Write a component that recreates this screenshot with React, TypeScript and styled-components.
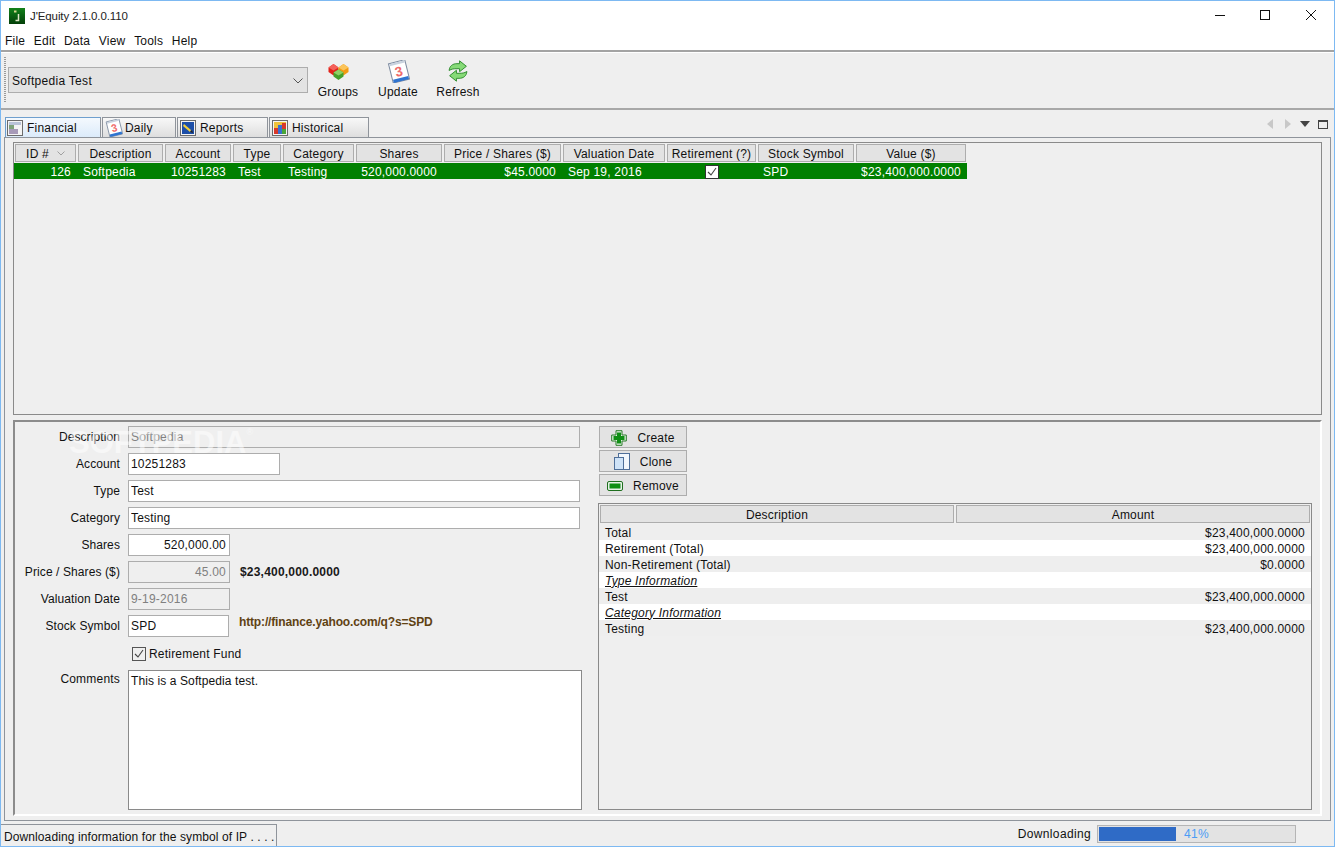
import React from "react";
import styled, { createGlobalStyle } from "styled-components";

const GlobalStyle = createGlobalStyle`
  html, body {
    margin: 0;
    padding: 0;
    background: #efefef;
  }
  * {
    box-sizing: border-box;
  }
`;

const Window = styled.div`
  width: 1335px;
  height: 847px;
  display: flex;
  flex-direction: column;
  overflow: hidden;
  background: #efefef;
  border: 1px solid #7db9f2;
  color: #111;
  font-family: "Liberation Sans", Arial, sans-serif;
  font-size: 12px;
  letter-spacing: 0.2px;
`;

const TitleBar = styled.div`
  height: 29px;
  flex: none;
  display: flex;
  align-items: center;
  padding-left: 8px;
  background: #fff;
`;

const TitleText = styled.span`
  margin-left: 5px;
  font-size: 11.5px;
  letter-spacing: -0.1px;
  color: #222;
`;

const WindowControls = styled.div`
  margin-left: auto;
  display: flex;
`;

const WindowControl = styled.div`
  width: 46px;
  height: 29px;
  display: flex;
  align-items: center;
  justify-content: center;
  padding-bottom: 1px;
`;

const MenuBar = styled.div`
  height: 20px;
  flex: none;
  display: flex;
  align-items: center;
  gap: 8.7px;
  padding: 2px 0 0 4px;
  background: #fff;
`;

const ToolBar = styled.div`
  height: 60px;
  flex: none;
  display: flex;
  align-items: flex-start;
  padding-left: 3px;
  border-top: 2px solid #a3a3a3;
  border-bottom: 2px solid #a8a8a8;
  box-shadow: inset 0 1px 0 #fff;
`;

const Grip = styled.div`
  width: 2px;
  height: 46px;
  margin: 5px 2px 0 0;
  background-image: linear-gradient(#9a9a9a 50%, transparent 50%);
  background-size: 2px 2px;
`;

const Combo = styled.div`
  width: 300px;
  height: 26px;
  display: flex;
  align-items: center;
  justify-content: space-between;
  margin-top: 15px;
  padding: 1px 4px 0 3px;
  background: #e3e3e3;
  border: 1px solid #adadad;
  letter-spacing: 0.3px;
`;

const ToolButton = styled.div`
  width: 60px;
  height: 39px;
  margin-top: 8px;
  display: flex;
  flex-direction: column;
  align-items: center;
  justify-content: space-between;
`;

const ToolIconSlot = styled.div`
  height: 22px;
  display: flex;
  align-items: center;
`;

const Workspace = styled.div`
  flex: none;
  display: flex;
  flex-direction: column;
  padding: 7px 3px 0;
`;

const TabStrip = styled.div`
  height: 20px;
  flex: none;
  display: flex;
  align-items: stretch;
  padding-left: 1px;
`;

const Tab = styled.div<{ $active?: boolean; $width: number; $gap?: number }>`
  width: ${(p) => p.$width}px;
  margin-right: 1px;
  display: flex;
  align-items: center;
  gap: ${(p) => p.$gap ?? 4}px;
  padding-left: ${(p) => (p.$active ? 1 : 2)}px;
  border: 1px solid #8f949b;
  border-bottom: none;
  border-left-color: ${(p) => (p.$active ? "#6f9fce" : "#8f949b")};
  border-top-color: ${(p) => (p.$active ? "#6f9fce" : "#8f949b")};
  background: ${(p) =>
    p.$active
      ? "linear-gradient(#f4f9fe, #dcebfa)"
      : "linear-gradient(#f8f8f8, #dedede)"};
`;

const DockControls = styled.div`
  margin-left: auto;
  display: flex;
  align-items: center;
  padding-right: 2px;
  padding-bottom: 6px;
`;

const TabPanel = styled.div`
  height: 684px;
  flex: none;
  display: flex;
  flex-direction: column;
  padding: 4px 8px 4px 8px;
  border: 1px solid #8f949b;
`;

const TableBox = styled.div`
  height: 273px;
  flex: none;
  padding: 1px 0;
  border: 1px solid #8a8a8a;
`;

const COLUMNS = "61px 85px 66px 48px 71px 86px 117px 102px 89px 96px 110px";

const HeaderRow = styled.div`
  display: grid;
  grid-template-columns: ${COLUMNS};
  column-gap: 2px;
  width: fit-content;
  padding: 0 1px;
`;

const HeaderCell = styled.div`
  height: 18px;
  display: flex;
  align-items: center;
  justify-content: center;
  gap: 8px;
  padding-top: 1px;
  background: #e3e3e3;
  border: 1px solid #adadad;
`;

const DataRow = styled(HeaderRow)`
  height: 16px;
  margin-top: 1px;
  padding-top: 1px;
  align-items: center;
  background: #008000;
  color: #fff;
`;

const DataCell = styled.div<{ $align?: string }>`
  padding: 0 5px;
  text-align: ${(p) => p.$align || "left"};
  white-space: nowrap;
  display: ${(p) => (p.$align === "center" ? "flex" : "block")};
  justify-content: center;
`;

const FormPanel = styled.div`
  position: relative;
  flex: 1;
  min-height: 0;
  display: flex;
  margin-top: 5px;
  border: 2px solid;
  border-color: #8c8c8c #fff #fff #8c8c8c;
`;

const Watermark = styled.div`
  position: absolute;
  left: 54px;
  top: 3px;
  font-size: 31px;
  font-weight: bold;
  letter-spacing: 0;
  color: rgba(255, 255, 255, 0.5);
  pointer-events: none;
  sup {
    font-size: 9px;
    font-weight: normal;
    vertical-align: 18px;
  }
`;

const FormColumn = styled.div`
  width: 583px;
  flex: none;
  display: flex;
  flex-direction: column;
  gap: 5px;
  padding-top: 4px;
`;

const FormRow = styled.div`
  display: flex;
  align-items: center;
  gap: 8px;
  height: 22px;
`;

const FieldLabel = styled.label`
  width: 105px;
  flex: none;
  text-align: right;
  white-space: nowrap;
  letter-spacing: 0.1px;
`;

const Field = styled.input<{ $width: number; $right?: boolean }>`
  width: ${(p) => p.$width}px;
  height: 22px;
  padding: 0 3px 0 2px;
  background: #fff;
  border: 1px solid #adadad;
  border-radius: 0;
  outline: none;
  color: #111;
  font: 12px "Liberation Sans", Arial, sans-serif;
  letter-spacing: 0.2px;
  text-align: ${(p) => (p.$right ? "right" : "left")};
  &:disabled {
    background: #efefef;
    color: #808080;
    -webkit-text-fill-color: #808080;
    opacity: 1;
  }
`;

const StrongValue = styled.span`
  margin-left: 2px;
  font-weight: bold;
  color: #1a1a1a;
`;

const LinkValue = styled.span`
  align-self: flex-start;
  margin: 0 0 0 2px;
  font-weight: bold;
  letter-spacing: -0.15px;
  color: #5f4213;
`;

const CheckRow = styled.div`
  display: flex;
  align-items: center;
  gap: 3px;
  height: 17px;
  margin: 3px 0 0 117px;
`;

const CommentRow = styled.div`
  display: flex;
  gap: 8px;
  margin-top: 3px;
`;

const CommentLabel = styled(FieldLabel)`
  padding-top: 2px;
  letter-spacing: 0.2px;
`;

const CommentBox = styled.textarea`
  width: 454px;
  height: 140px;
  padding: 3px 2px;
  resize: none;
  background: #fff;
  border: 1px solid #8a8a8a;
  border-radius: 0;
  outline: none;
  color: #111;
  font: 12px "Liberation Sans", Arial, sans-serif;
  letter-spacing: 0.1px;
`;

const SideColumn = styled.div`
  flex: 1;
  min-width: 0;
  display: flex;
  flex-direction: column;
  padding: 4px 8px 4px 0;
`;

const ActionButtons = styled.div`
  display: flex;
  flex-direction: column;
  gap: 2px;
  margin-left: 1px;
`;

const ActionButton = styled.div`
  width: 88px;
  height: 22px;
  display: flex;
  align-items: center;
  justify-content: center;
  gap: 10px;
  padding-top: 1px;
  background: #e3e3e3;
  border: 1px solid #adadad;
`;

const Summary = styled.div`
  flex: 1;
  margin-top: 7px;
  padding-top: 1px;
  border: 1px solid #8a8a8a;
`;

const SummaryHeader = styled.div`
  display: grid;
  grid-template-columns: 354px 354px;
  column-gap: 2px;
  padding: 0 1px;
  margin-bottom: 1px;
`;

const SummaryRow = styled.div<{ $odd: boolean }>`
  height: 16px;
  display: flex;
  align-items: center;
  justify-content: space-between;
  padding: 1px 6px 0;
  background: ${(p) => (p.$odd ? "#fff" : "#eeeeee")};
`;

const SectionTitle = styled.span`
  font-style: italic;
  text-decoration: underline;
`;

const StatusBar = styled.div`
  flex: 1;
  min-height: 0;
  display: flex;
  align-items: flex-start;
  padding: 3px 0 0;
`;

const StatusMessage = styled.div`
  width: 276px;
  height: 22px;
  display: flex;
  align-items: center;
  padding: 2px 0 0 3px;
  border-top: 1px solid #8f949b;
  border-right: 1px solid #8f949b;
  white-space: nowrap;
  letter-spacing: 0.1px;
`;

const ProgressArea = styled.div`
  margin-left: auto;
  display: flex;
  align-items: center;
  gap: 6px;
  height: 18px;
  margin-top: 1px;
  padding-right: 38px;
  letter-spacing: 0.35px;
`;

const ProgressTrack = styled.div`
  position: relative;
  width: 199px;
  height: 18px;
  padding: 1px;
  background: #e3e3e3;
  border: 1px solid #b5b5b5;
`;

const ProgressFill = styled.div`
  height: 100%;
  background: #2f6bc6;
`;

const ProgressText = styled.span`
  position: absolute;
  inset: 0;
  display: flex;
  align-items: center;
  justify-content: center;
  color: #4a9cf5;
`;

const AppLogo = () => (
  <svg width="16" height="16" viewBox="0 0 16 16">
    <defs>
      <linearGradient id="logoFill" x1="0" y1="0" x2="0" y2="1">
        <stop offset="0" stopColor="#12821a" />
        <stop offset="1" stopColor="#033f08" />
      </linearGradient>
    </defs>
    <rect width="16" height="16" fill="url(#logoFill)" />
    <path d="M9.500 6v6.500H6.500" fill="none" stroke="#dfe6c8" strokeWidth="1.500" />
    <rect x="5" y="2.500" width="2.500" height="2" fill="#d8d890" />
  </svg>
);

const GroupsIcon = () => (
  <svg width="21" height="17" viewBox="0 0 21 17">
    <path d="M0.500 4.500l5-3.500 5 3.500v4.500l-5 3.500-5-3.500z" fill="#e2231a" />
    <path d="M0.500 4.500l5 3 5-3-5-3.500z" fill="#f4605a" />
    <path d="M10.500 4.500l5-3.500 5 3.500v4.500l-5 3.500-5-3.500z" fill="#f39a12" />
    <path d="M10.500 4.500l5 3 5-3-5-3.500z" fill="#fbc45a" />
    <path d="M5.500 9.500l5-3 5 3v4l-5 3.500-5-3.500z" fill="#45a12a" />
    <path d="M5.500 9.500l5 3 5-3-5-3z" fill="#8fd064" />
  </svg>
);

const CalendarIcon = ({ size }: { size: number }) => (
  <svg width={size} height={size} viewBox="0 0 22 22">
    <g transform="rotate(-14 11 11)">
      <rect x="3.500" y="1.500" width="16" height="19" fill="#fff" stroke="#7d8ba0" />
      <rect x="4" y="17.500" width="15" height="3" fill="#2f74d0" />
      <rect x="4" y="2" width="15" height="2" fill="#c9d2de" />
      <text
        x="11.500"
        y="15.500"
        textAnchor="middle"
        fontSize="13"
        fontWeight="bold"
        fontFamily="Liberation Sans"
        fill="#f06a6a"
      >
        3
      </text>
    </g>
  </svg>
);

const RefreshIcon = () => (
  <svg width="22" height="22" viewBox="0 0 20 21">
    <path
      d="M1.500 10C2 5.500 5 3.500 9 3.500h2.500V0.800L18 6l-6.500 5.200V8.300H9C6 8.300 4 8.500 1.500 10z"
      fill="#86da77"
      stroke="#2c8a2c"
      strokeWidth="0.900"
    />
    <path
      d="M18.500 11c-.5 4.500-3.500 6.500-7.500 6.500H8.500v2.700L2 15l6.500-5.200v2.900H11c3 0 5 -.2 7.500-1.700z"
      fill="#86da77"
      stroke="#2c8a2c"
      strokeWidth="0.900"
    />
  </svg>
);

const IconFrame = ({ children }: { children: React.ReactNode }) => (
  <svg width="16" height="16" viewBox="0 0 16 16">
    <rect x="0.500" y="0.500" width="15" height="15" fill="#f4f4f4" stroke="#6b6b6b" />
    {children}
  </svg>
);

const FinancialIcon = () => (
  <IconFrame>
    <rect x="2" y="2" width="12" height="3" fill="#b9c3d8" />
    <rect x="2" y="5" width="5" height="4" fill="#7fa37a" />
    <rect x="2" y="9" width="9" height="5" fill="#a79ab8" />
  </IconFrame>
);

const ReportsIcon = () => (
  <IconFrame>
    <rect x="2" y="2" width="12" height="12" fill="#1d4fa8" />
    <path d="M4 4l7 6-1 2-7-6z" fill="#f2cf3a" />
    <path d="M10 12l3 1-1-3z" fill="#222" />
  </IconFrame>
);

const HistoricalIcon = () => (
  <IconFrame>
    <rect x="2" y="2" width="12" height="12" fill="#f0c23a" />
    <rect x="2" y="8" width="4" height="6" fill="#d8392b" />
    <rect x="6" y="5" width="4" height="9" fill="#3b6fd0" />
    <rect x="10" y="3" width="4" height="6" fill="#d8392b" />
    <rect x="10" y="9" width="4" height="5" fill="#4aa63a" />
  </IconFrame>
);

const PlusIcon = () => (
  <svg width="16" height="16" viewBox="0 0 16 16">
    <path
      d="M5 0.700h6v4.300h4.300v6H11v4.300H5V11H0.700V5H5z"
      fill="#dff0df"
      stroke="#2a7d2a"
      strokeLinejoin="round"
    />
    <path d="M6 2.500h4V6h3.500v4H10v3.500H6V10H2.500V6H6z" fill="#0f8f14" />
  </svg>
);

const CloneIcon = () => (
  <svg width="16" height="17" viewBox="0 0 16 17">
    <rect x="4.500" y="0.500" width="11" height="16" fill="#f2f7fc" stroke="#4f6f99" />
    <rect x="0.500" y="4.500" width="9" height="12" fill="#cfe3f7" stroke="#4f6f99" />
  </svg>
);

const RemoveIcon = () => (
  <svg width="16" height="10" viewBox="0 0 16 10">
    <rect x="0.500" y="0.500" width="15" height="9" rx="1.500" fill="#e6f2e6" stroke="#1f6f1f" />
    <rect x="2.500" y="2.500" width="11" height="5" fill="#0f8f14" />
  </svg>
);

const Chevron = () => (
  <svg width="10" height="6" viewBox="0 0 10 6">
    <path d="M0.500 0.500L5 5l4.500-4.500" fill="none" stroke="#555" />
  </svg>
);

const SortChevron = () => (
  <svg width="8" height="5" viewBox="0 0 8 5">
    <path d="M0.500 0.500L4 4l3.500-3.500" fill="none" stroke="#a0a0a0" />
  </svg>
);

const CheckMark = ({ dark }: { dark?: boolean }) => (
  <svg width="14" height="14" viewBox="0 0 14 14">
    <rect
      x="0.500"
      y="0.500"
      width="13"
      height="13"
      fill={dark ? "#efefef" : "#fff"}
      stroke={dark ? "#555" : "#333"}
    />
    <path d="M3 7l3 3 5-7" fill="none" stroke="#444" strokeWidth="1.100" />
  </svg>
);

const headers = [
  "ID #",
  "Description",
  "Account",
  "Type",
  "Category",
  "Shares",
  "Price / Shares ($)",
  "Valuation Date",
  "Retirement (?)",
  "Stock Symbol",
  "Value ($)",
];

const summaryRows = [
  { label: "Total", amount: "$23,400,000.0000" },
  { label: "Retirement (Total)", amount: "$23,400,000.0000" },
  { label: "Non-Retirement (Total)", amount: "$0.0000" },
  { label: "Type Information", section: true },
  { label: "Test", amount: "$23,400,000.0000" },
  { label: "Category Information", section: true },
  { label: "Testing", amount: "$23,400,000.0000" },
];

const App: React.FC = () => (
  <Window>
    <GlobalStyle />
    <TitleBar>
      <AppLogo />
      <TitleText>J'Equity 2.1.0.0.110</TitleText>
      <WindowControls>
        <WindowControl>
          <svg width="12" height="10" viewBox="0 0 12 10">
            <path d="M2 5.500h10" stroke="#111" />
          </svg>
        </WindowControl>
        <WindowControl>
          <svg width="10" height="10" viewBox="0 0 10 10">
            <rect x="0.500" y="0.500" width="9" height="9" fill="none" stroke="#111" />
          </svg>
        </WindowControl>
        <WindowControl>
          <svg width="10" height="10" viewBox="0 0 10 10">
            <path d="M0 0l10 10M10 0L0 10" stroke="#111" />
          </svg>
        </WindowControl>
      </WindowControls>
    </TitleBar>

    <MenuBar>
      <span>File</span>
      <span>Edit</span>
      <span>Data</span>
      <span>View</span>
      <span>Tools</span>
      <span>Help</span>
    </MenuBar>

    <ToolBar>
      <Grip />
      <Combo>
        <span>Softpedia Test</span>
        <Chevron />
      </Combo>
      <ToolButton>
        <ToolIconSlot>
          <GroupsIcon />
        </ToolIconSlot>
        <span>Groups</span>
      </ToolButton>
      <ToolButton>
        <ToolIconSlot>
          <CalendarIcon size={23} />
        </ToolIconSlot>
        <span>Update</span>
      </ToolButton>
      <ToolButton>
        <ToolIconSlot>
          <RefreshIcon />
        </ToolIconSlot>
        <span>Refresh</span>
      </ToolButton>
    </ToolBar>

    <Workspace>
      <TabStrip>
        <Tab $active $width={96}>
          <FinancialIcon />
          <span>Financial</span>
        </Tab>
        <Tab $width={74} $gap={2}>
          <CalendarIcon size={18} />
          <span>Daily</span>
        </Tab>
        <Tab $width={91}>
          <ReportsIcon />
          <span>Reports</span>
        </Tab>
        <Tab $width={100}>
          <HistoricalIcon />
          <span>Historical</span>
        </Tab>
        <DockControls>
          <svg width="18" height="10" viewBox="0 0 18 10">
            <path d="M11 0v10L5 5z" fill="#c8c8c8" />
          </svg>
          <svg width="18" height="10" viewBox="0 0 18 10">
            <path d="M5 0v10l6-5z" fill="#c8c8c8" />
          </svg>
          <svg width="17" height="6" viewBox="0 0 17 6">
            <path d="M2 0h10L7 6z" fill="#444" />
          </svg>
          <svg width="14" height="9" viewBox="0 0 14 9">
            <rect x="3.500" y="0.500" width="9" height="8" fill="none" stroke="#444" />
            <path d="M3 1.500h10" stroke="#444" />
          </svg>
        </DockControls>
      </TabStrip>

      <TabPanel>
        <TableBox>
          <HeaderRow>
            {headers.map((h, i) => (
              <HeaderCell key={h}>
                {h}
                {i === 0 && <SortChevron />}
              </HeaderCell>
            ))}
          </HeaderRow>
          <DataRow>
            <DataCell $align="right">126</DataCell>
            <DataCell>Softpedia</DataCell>
            <DataCell $align="right">10251283</DataCell>
            <DataCell>Test</DataCell>
            <DataCell>Testing</DataCell>
            <DataCell $align="right">520,000.0000</DataCell>
            <DataCell $align="right">$45.0000</DataCell>
            <DataCell>Sep 19, 2016</DataCell>
            <DataCell $align="center">
              <CheckMark />
            </DataCell>
            <DataCell>SPD</DataCell>
            <DataCell $align="right">$23,400,000.0000</DataCell>
          </DataRow>
        </TableBox>

        <FormPanel>
          <FormColumn>
            <FormRow>
              <FieldLabel>Description</FieldLabel>
              <Field $width={452} disabled value="Softpedia" readOnly />
            </FormRow>
            <FormRow>
              <FieldLabel>Account</FieldLabel>
              <Field $width={152} value="10251283" readOnly />
            </FormRow>
            <FormRow>
              <FieldLabel>Type</FieldLabel>
              <Field $width={452} value="Test" readOnly />
            </FormRow>
            <FormRow>
              <FieldLabel>Category</FieldLabel>
              <Field $width={452} value="Testing" readOnly />
            </FormRow>
            <FormRow>
              <FieldLabel>Shares</FieldLabel>
              <Field $width={102} $right value="520,000.00" readOnly />
            </FormRow>
            <FormRow>
              <FieldLabel>Price / Shares ($)</FieldLabel>
              <Field $width={102} $right disabled value="45.00" readOnly />
              <StrongValue>$23,400,000.0000</StrongValue>
            </FormRow>
            <FormRow>
              <FieldLabel>Valuation Date</FieldLabel>
              <Field $width={102} disabled value="9-19-2016" readOnly />
            </FormRow>
            <FormRow>
              <FieldLabel>Stock Symbol</FieldLabel>
              <Field $width={101} value="SPD" readOnly />
              <LinkValue>http://finance.yahoo.com/q?s=SPD</LinkValue>
            </FormRow>
            <CheckRow>
              <CheckMark dark />
              <span>Retirement Fund</span>
            </CheckRow>
            <CommentRow>
              <CommentLabel>Comments</CommentLabel>
              <CommentBox value="This is a Softpedia test." readOnly />
            </CommentRow>
          </FormColumn>

          <SideColumn>
            <ActionButtons>
              <ActionButton>
                <PlusIcon />
                <span>Create</span>
              </ActionButton>
              <ActionButton>
                <CloneIcon />
                <span>Clone</span>
              </ActionButton>
              <ActionButton>
                <RemoveIcon />
                <span>Remove</span>
              </ActionButton>
            </ActionButtons>
            <Summary>
              <SummaryHeader>
                <HeaderCell>Description</HeaderCell>
                <HeaderCell>Amount</HeaderCell>
              </SummaryHeader>
              {summaryRows.map((row, i) => (
                <SummaryRow key={row.label} $odd={i % 2 === 1}>
                  {row.section ? (
                    <SectionTitle>{row.label}</SectionTitle>
                  ) : (
                    <span>{row.label}</span>
                  )}
                  <span>{row.amount}</span>
                </SummaryRow>
              ))}
            </Summary>
          </SideColumn>
          <Watermark>
            SOFTPEDIA<sup>®</sup>
          </Watermark>
        </FormPanel>
      </TabPanel>
    </Workspace>

    <StatusBar>
      <StatusMessage>Downloading information for the symbol of IP . . . .</StatusMessage>
      <ProgressArea>
        <span>Downloading</span>
        <ProgressTrack>
          <ProgressFill style={{ width: "39.6%" }} />
          <ProgressText>41%</ProgressText>
        </ProgressTrack>
      </ProgressArea>
    </StatusBar>
  </Window>
);

export default App;
